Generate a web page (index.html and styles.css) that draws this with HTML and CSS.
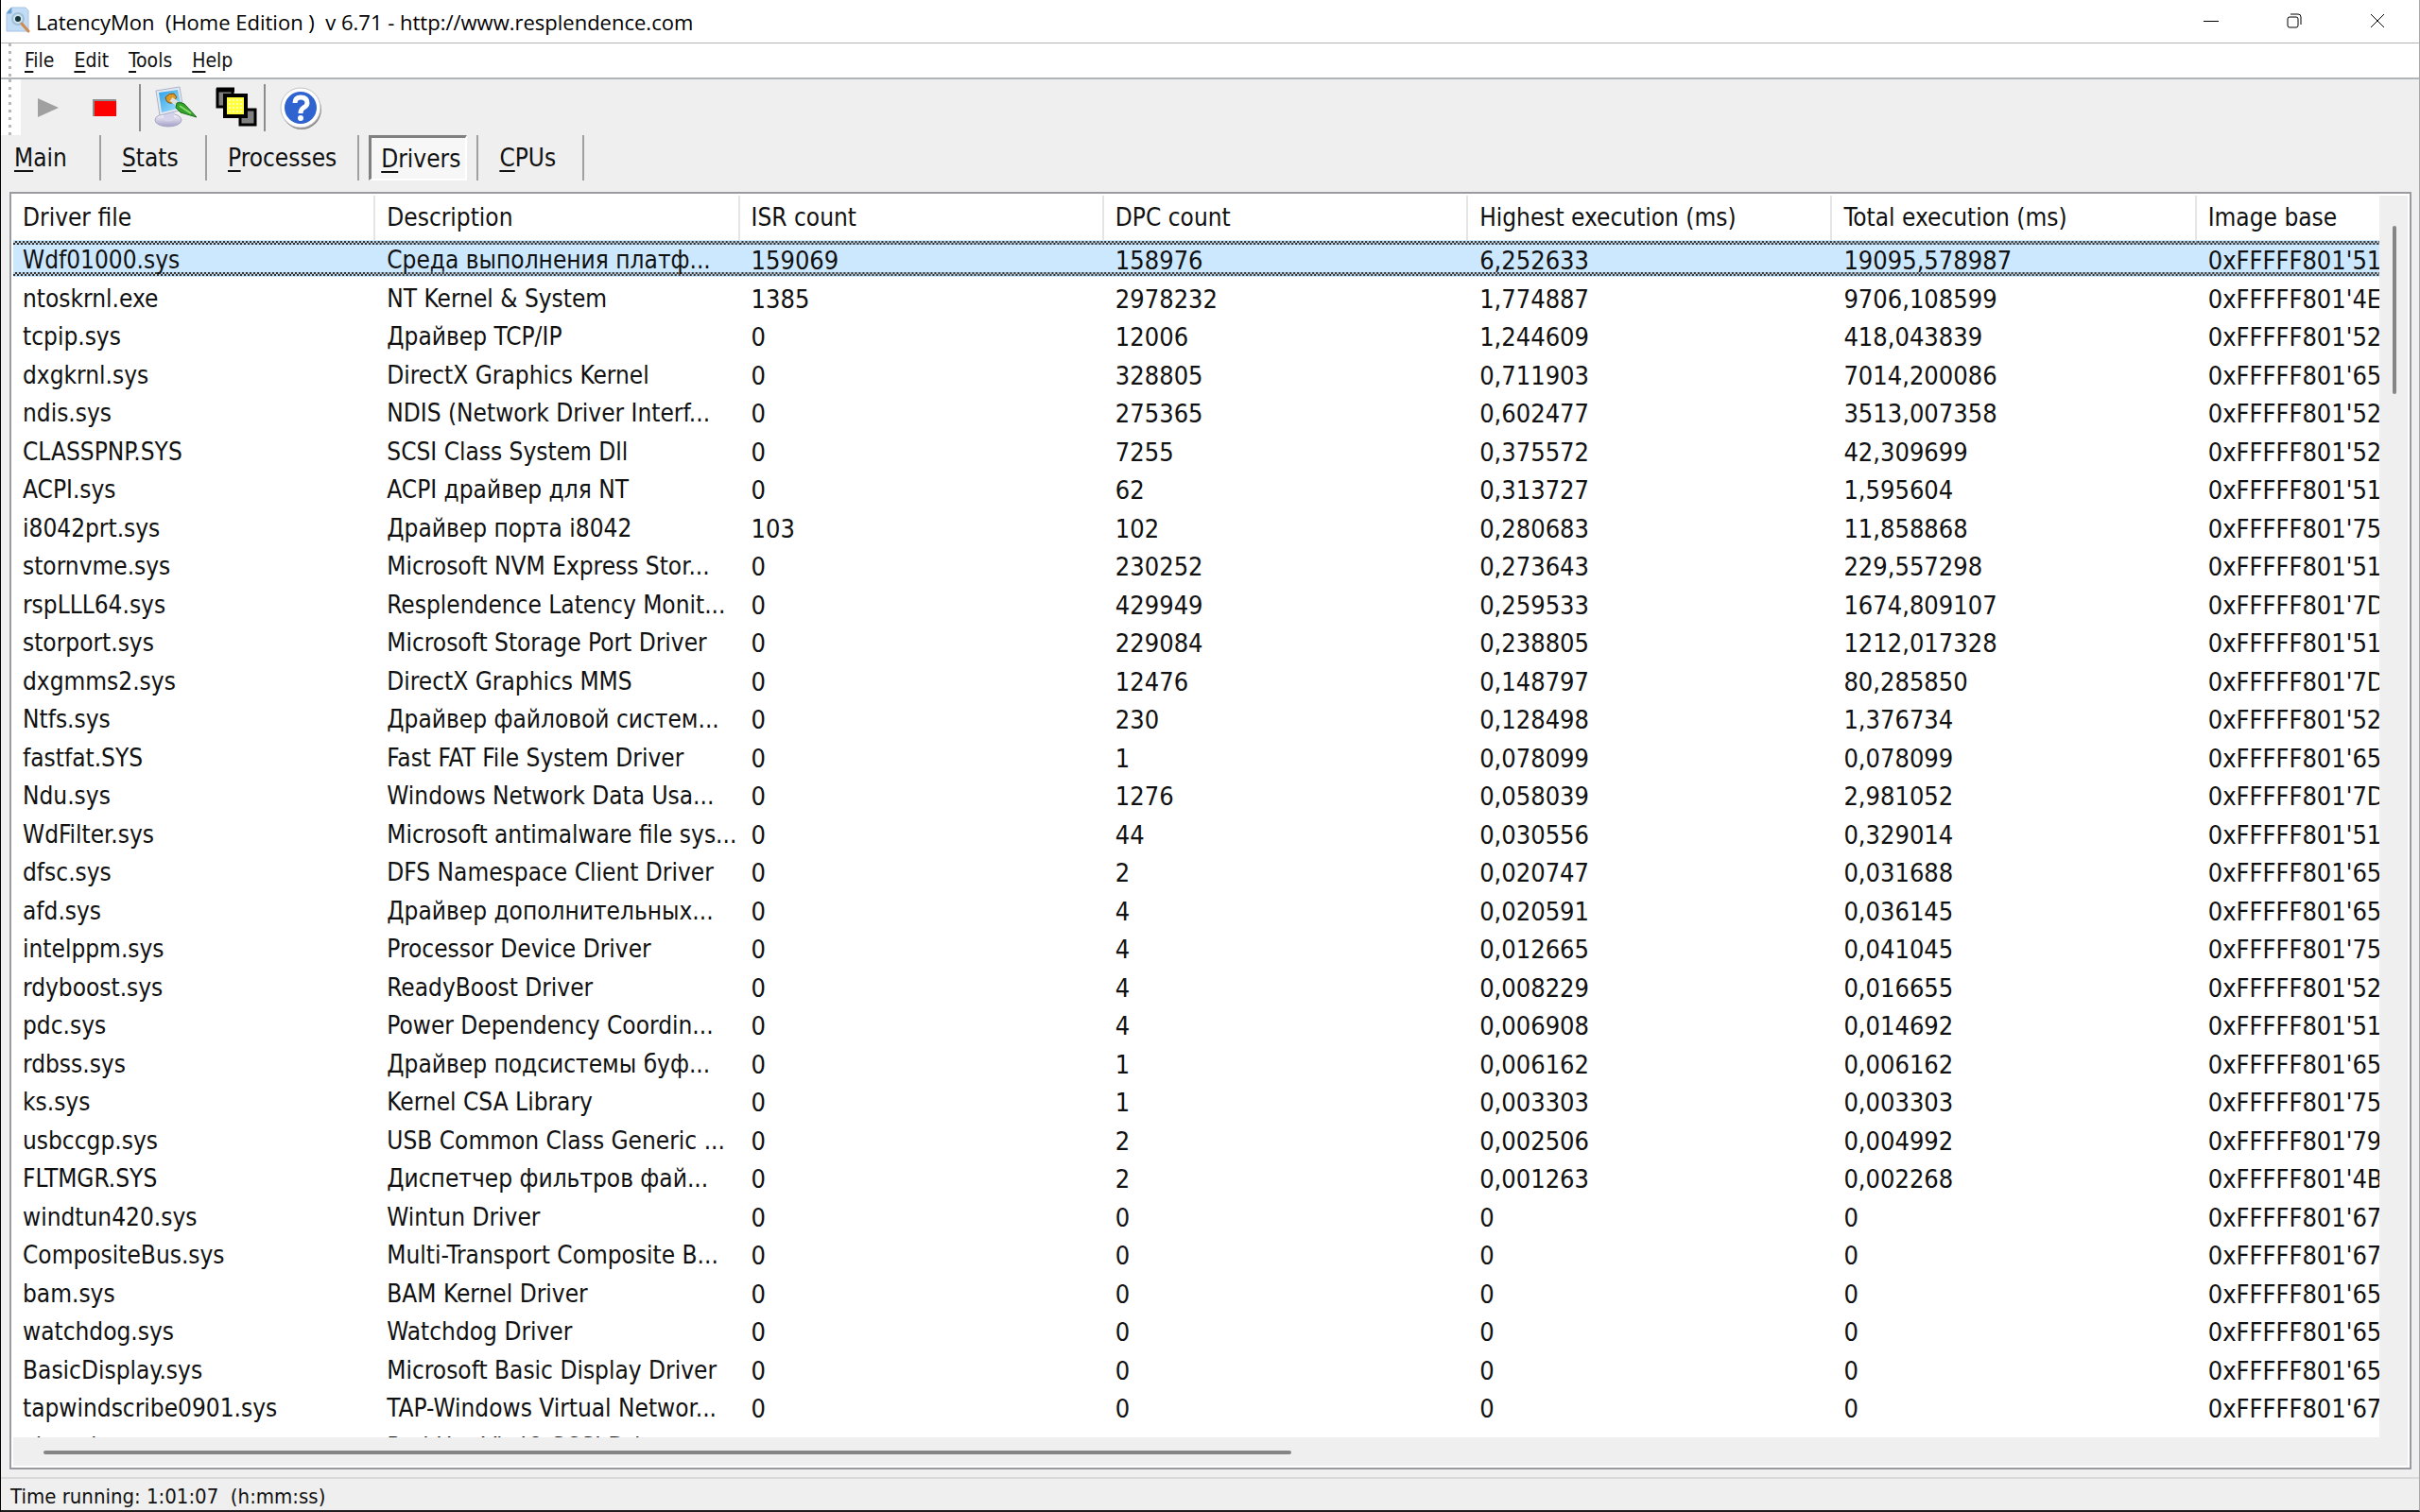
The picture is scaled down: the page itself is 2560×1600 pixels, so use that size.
FILE: index.html
```html
<!DOCTYPE html>
<html lang="en">
<head>
    <meta charset="UTF-8">
    <meta name="viewport" content="width=device-width, initial-scale=1.0">
    <title>LatencyMon</title>
    <link rel="stylesheet" href="styles.css">
</head>
<body>
    <header class="titlebar">
        <svg class="app-icon" viewBox="0 0 26 28">
            <path d="M6 1h15l3 3v22H1V7z" fill="#c3dcf5" stroke="#a5c4e6"/>
            <path d="M6 1v6H1z" fill="#5f97d6" stroke="#7fa9d6"/>
            <circle cx="13" cy="13" r="6" fill="#cfe3f0" stroke="#9fbfd6" stroke-width="2"/>
            <circle cx="13" cy="13" r="3" fill="#17343c"/>
            <path d="M17 18l7 8" stroke="#d08a50" stroke-width="3" stroke-linecap="round"/>
        </svg>
        <h1>LatencyMon&nbsp; (Home Edition )&nbsp; v 6.71 - http://www.resplendence.com</h1>
        <div class="window-buttons">
            <button aria-label="Minimize"><svg viewBox="0 0 16 16"><path d="M0 8.500h16"/></svg></button>
            <button aria-label="Restore"><svg viewBox="0 0 16 16"><rect x="1" y="4" width="11" height="11" rx="2"/><path d="M4 1h8q3 0 3 3v8"/></svg></button>
            <button aria-label="Close"><svg viewBox="0 0 16 16"><path d="M1 1l14 14M15 1L1 15"/></svg></button>
        </div>
    </header>

    <nav class="menubar">
        <button><u>F</u>ile</button>
        <button><u>E</u>dit</button>
        <button><u>T</u>ools</button>
        <button><u>H</u>elp</button>
    </nav>

    <div class="toolbar">
        <div class="grip"></div>
        <button aria-label="Start"><svg viewBox="0 0 48 48"><path d="M13 14v20l22-10z" fill="#a0a0a0"/></svg></button>
        <button aria-label="Stop"><svg viewBox="0 0 48 48"><path d="M12 33V16h24" fill="none" stroke="#8c8c8c" stroke-width="2"/><path d="M13 17h23v16H13z" fill="#f00"/></svg></button>
        <div class="divider"></div>
        <button class="wide" aria-label="Options">
            <svg viewBox="0 0 48 48">
                <defs>
                    <linearGradient id="screen" x1="0" y1="0" x2="1" y2="1">
                        <stop offset="0" stop-color="#2d9fe8"/>
                        <stop offset="1" stop-color="#a9e6fb"/>
                    </linearGradient>
                    <linearGradient id="base" x1="0" y1="0" x2="0" y2="1">
                        <stop offset="0" stop-color="#fff"/>
                        <stop offset="1" stop-color="#a29dc8"/>
                    </linearGradient>
                </defs>
                <ellipse cx="17" cy="37" rx="14" ry="7" fill="url(#base)" stroke="#aaa7c5"/>
                <path d="M12 28h11v9q-6 3-11 0z" fill="#d5d2ec"/>
                <path d="M4 6l25-4 4 24-25 6z" fill="#e4e8f2" stroke="#a9b3c8"/>
                <path d="M7 8l20-3 4 19-21 5z" fill="url(#screen)"/>
                <path d="M14 13q4-5 9-4l3 4-5 6q-6 1-7-6z" fill="#d99b28" stroke="#805014"/>
                <path d="M20 15l7 5" stroke="#e0e0e0" stroke-width="5"/>
                <path d="M26 19q3-2 8 1l13 14-17-5-5-5z" fill="#35a32b" stroke="#176e16"/>
                <path d="M29 22l12 8" stroke="#8bdd71" stroke-width="2"/>
            </svg>
        </button>
        <button class="wide" aria-label="Windows">
            <svg viewBox="0 0 48 48">
                <g stroke="#000" stroke-width="3">
                    <path d="M4 5h16v18H4z" fill="#808080"/>
                    <path d="M28 26h16v16H28z" fill="#808080"/>
                    <path d="M12 11h22v22H12z" fill="#ffff3c" stroke-width="4"/>
                </g>
                <path d="M3 5h19" stroke="#000" stroke-width="5"/>
                <path d="M16 16h16M16 20h16M16 24h16M16 28h16" stroke="#ffffa8" stroke-width="2" stroke-dasharray="2 2"/>
            </svg>
        </button>
        <div class="divider"></div>
        <button class="wide" aria-label="About">
            <svg viewBox="0 0 48 48">
                <circle cx="26" cy="26" r="21" fill="#8e8e8e"/>
                <circle cx="25" cy="24" r="21" fill="#fff" stroke="#c4c4c4"/>
                <circle cx="25" cy="24" r="17" fill="#2f63cf"/>
                <path d="M19 19q0-6 6-6 7 0 7 6 0 3-4 5-3 2-3 6" fill="none" stroke="#fff" stroke-width="5"/>
                <circle cx="25" cy="35" r="3" fill="#fff"/>
            </svg>
        </button>
    </div>

    <nav class="tabs">
        <div class="tab"><button><u>M</u>ain</button></div>
        <div class="tab"><button><u>S</u>tats</button></div>
        <div class="tab"><button><u>P</u>rocesses</button></div>
        <div class="tab"><button class="active"><u>D</u>rivers</button></div>
        <div class="tab"><button><u>C</u>PUs</button></div>
    </nav>

    <main class="list">
        <div class="list-view">
            <table>
                <thead>
                    <tr>
                        <th>Driver file</th>
                        <th>Description</th>
                        <th>ISR count</th>
                        <th>DPC count</th>
                        <th>Highest execution (ms)</th>
                        <th>Total execution (ms)</th>
                        <th>Image base</th>
                    </tr>
                </thead>
                <tbody id="drivers"></tbody>
            </table>
        </div>
        <div class="scroll-y"><div class="thumb"></div></div>
        <div class="scroll-x"><div class="thumb"></div></div>
    </main>

    <footer class="statusbar">Time running: 1:01:07&nbsp; (h:mm:ss)</footer>

    <script>
        // file, description, ISR count, DPC count, highest, total, image base
        const drivers = [
            ["Wdf01000.sys", "Среда выполнения платф...", "159069", "158976", "6,252633", "19095,578987", "51"],
            ["ntoskrnl.exe", "NT Kernel & System", "1385", "2978232", "1,774887", "9706,108599", "4E"],
            ["tcpip.sys", "Драйвер TCP/IP", "0", "12006", "1,244609", "418,043839", "52"],
            ["dxgkrnl.sys", "DirectX Graphics Kernel", "0", "328805", "0,711903", "7014,200086", "65"],
            ["ndis.sys", "NDIS (Network Driver Interf...", "0", "275365", "0,602477", "3513,007358", "52"],
            ["CLASSPNP.SYS", "SCSI Class System Dll", "0", "7255", "0,375572", "42,309699", "52"],
            ["ACPI.sys", "ACPI драйвер для NT", "0", "62", "0,313727", "1,595604", "51"],
            ["i8042prt.sys", "Драйвер порта i8042", "103", "102", "0,280683", "11,858868", "75"],
            ["stornvme.sys", "Microsoft NVM Express Stor...", "0", "230252", "0,273643", "229,557298", "51"],
            ["rspLLL64.sys", "Resplendence Latency Monit...", "0", "429949", "0,259533", "1674,809107", "7D"],
            ["storport.sys", "Microsoft Storage Port Driver", "0", "229084", "0,238805", "1212,017328", "51"],
            ["dxgmms2.sys", "DirectX Graphics MMS", "0", "12476", "0,148797", "80,285850", "7D"],
            ["Ntfs.sys", "Драйвер файловой систем...", "0", "230", "0,128498", "1,376734", "52"],
            ["fastfat.SYS", "Fast FAT File System Driver", "0", "1", "0,078099", "0,078099", "65"],
            ["Ndu.sys", "Windows Network Data Usa...", "0", "1276", "0,058039", "2,981052", "7D"],
            ["WdFilter.sys", "Microsoft antimalware file sys...", "0", "44", "0,030556", "0,329014", "51"],
            ["dfsc.sys", "DFS Namespace Client Driver", "0", "2", "0,020747", "0,031688", "65"],
            ["afd.sys", "Драйвер дополнительных...", "0", "4", "0,020591", "0,036145", "65"],
            ["intelppm.sys", "Processor Device Driver", "0", "4", "0,012665", "0,041045", "75"],
            ["rdyboost.sys", "ReadyBoost Driver", "0", "4", "0,008229", "0,016655", "52"],
            ["pdc.sys", "Power Dependency Coordin...", "0", "4", "0,006908", "0,014692", "51"],
            ["rdbss.sys", "Драйвер подсистемы буф...", "0", "1", "0,006162", "0,006162", "65"],
            ["ks.sys", "Kernel CSA Library", "0", "1", "0,003303", "0,003303", "75"],
            ["usbccgp.sys", "USB Common Class Generic ...", "0", "2", "0,002506", "0,004992", "79"],
            ["FLTMGR.SYS", "Диспетчер фильтров фай...", "0", "2", "0,001263", "0,002268", "4B"],
            ["windtun420.sys", "Wintun Driver", "0", "0", "0", "0", "67"],
            ["CompositeBus.sys", "Multi-Transport Composite B...", "0", "0", "0", "0", "67"],
            ["bam.sys", "BAM Kernel Driver", "0", "0", "0", "0", "65"],
            ["watchdog.sys", "Watchdog Driver", "0", "0", "0", "0", "65"],
            ["BasicDisplay.sys", "Microsoft Basic Display Driver", "0", "0", "0", "0", "65"],
            ["tapwindscribe0901.sys", "TAP-Windows Virtual Networ...", "0", "0", "0", "0", "67"],
            ["vioscsi.sys", "Red Hat VirtIO SCSI Driver", "0", "0", "0", "0", "67"]
        ];

        const body = document.getElementById('drivers');
        drivers.forEach((driver, i) => {
            const row = body.insertRow();
            if (i === 0) row.className = 'selected';
            driver.forEach((value, col) => {
                const cell = row.insertCell();
                cell.textContent = col === 6 ? "0xFFFFF801'" + value : value;
                if (col > 1) cell.className = 'num';
            });
        });
    </script>
</body>
</html>
```
FILE: styles.css
```css
:root {
    --face: #efefef;
    --line: #a0a0a0;
    --thumb: #858585;
    --select: #cce8ff;
}

* {
    box-sizing: border-box;
}

body {
    display: flex;
    flex-direction: column;
    height: 100vh;
    margin: 0;
    overflow: hidden;
    background: var(--face);
    border-left: 1px solid #000;
    border-right: 1px solid #a8a8a8;
    border-bottom: 2px solid #1e1c1e;
    color: #111;
    font-family: "DejaVu Sans Condensed", "DejaVu Sans", sans-serif;
    font-size: 26px;
}

button {
    padding: 0;
    background: none;
    border: none;
    color: inherit;
    font: inherit;
}

u {
    text-decoration-thickness: 2px;
    text-underline-offset: 4px;
    text-decoration-skip-ink: none;
}

.titlebar {
    display: flex;
    align-items: flex-start;
    height: 46px;
    padding-left: 5px;
    background: #fff;
    border-bottom: 1px solid #b4b4b4;
}

.app-icon {
    width: 26px;
    height: 28px;
    margin: 7px 6px 0 0;
}

.titlebar h1 {
    margin: 0;
    color: #000;
    font-family: "Open Sans", "Noto Sans", sans-serif;
    font-size: 22px;
    font-weight: normal;
    line-height: 46px;
}

.window-buttons {
    display: flex;
    margin-left: auto;
}

.window-buttons button {
    display: flex;
    align-items: center;
    justify-content: center;
    width: 88px;
    height: 44px;
}

.window-buttons svg {
    width: 16px;
    height: 16px;
    fill: none;
    stroke: #000;
}

.menubar {
    display: flex;
    align-items: center;
    gap: 21px;
    height: 38px;
    padding-left: 25px;
    background: repeating-linear-gradient(#b8b8b8 0 3px, #fff 3px 8px) 8px 0 / 3px 100% no-repeat #fff;
    border-bottom: 2px solid #b2b5b7;
    font-size: 21px;
}

.toolbar {
    display: flex;
    align-items: center;
    height: 59px;
}

.grip {
    width: 21px;
    height: 100%;
    margin-right: 5px;
    background: repeating-linear-gradient(#b8b8b8 0 3px, #fff 3px 8px) 8px 0 / 3px 100% no-repeat #fff;
}

.toolbar button {
    width: 60px;
    height: 48px;
}

.toolbar svg {
    display: block;
    width: 48px;
    height: 48px;
}

.toolbar .wide {
    width: 65px;
    padding-left: 12px;
}

.divider {
    width: 2px;
    height: 50px;
    background: #8c8c8c;
}

.tabs {
    display: flex;
    height: 48px;
    margin-bottom: 12px;
}

.tab {
    display: flex;
    min-width: 112px;
    padding: 0 10px;
    border-right: 2px solid var(--line);
}

.tab button {
    padding: 0 12px;
    line-height: 44px;
}

.tab:first-child {
    min-width: 106px;
    padding: 0 2px;
}

.tab .active {
    padding: 0 5px 0 10px;
    background: #f7f7f7;
    border: 2px solid #fff;
    border-top: 3px solid #808080;
    border-left: 3px solid #808080;
}

.list {
    display: grid;
    grid-template: 1fr 32px / 1fr 32px;
    flex: 1;
    min-height: 0;
    margin: 0 8px 8px 9px;
    border: 2px solid #999ba1;
    outline: 2px solid #fff;
    outline-offset: -4px;
}

.list-view {
    overflow: hidden;
    background: #fff;
}

table {
    width: 2697px;
    table-layout: fixed;
    border-spacing: 0;
}

th, td {
    padding: 0 0 0 12px;
    text-align: left;
    font-weight: normal;
    line-height: 40px;
    white-space: nowrap;
}

th {
    height: 49px;
    border-right: 2px solid #e5e5e5;
}

td {
    padding-top: 3px;
    line-height: 37px;
}

.num {
    font-size: 27px;
}

tbody tr {
    height: 40px;
}

tbody tr:nth-child(even) {
    height: 41px;
}

/* focus rectangle drawn as a fine checker band */
.selected {
    --checker: repeating-conic-gradient(#333 0 25%, #b9d2e6 0 50%);
    background:
        linear-gradient(var(--select), var(--select)) 6px 5px / 100% 29px no-repeat,
        var(--checker) 2px 1px / 4px 4px repeat-x,
        var(--checker) 2px 34px / 4px 4px repeat-x,
        linear-gradient(var(--select), var(--select)) 0 0 / 100% 39px no-repeat;
}

.scroll-y {
    padding: 34px 14px 0;
}

.scroll-y .thumb {
    width: 4px;
    height: 178px;
    border-radius: 2px;
    background: var(--thumb);
}

.scroll-x {
    grid-column: 1 / 3;
    padding: 14px 34px;
}

.scroll-x .thumb {
    width: 1320px;
    max-width: 100%;
    height: 4px;
    border-radius: 2px;
    background: var(--thumb);
}

.statusbar {
    height: 35px;
    padding-left: 10px;
    border-top: 2px solid #dadada;
    font-size: 22px;
    line-height: 38px;
}
```
